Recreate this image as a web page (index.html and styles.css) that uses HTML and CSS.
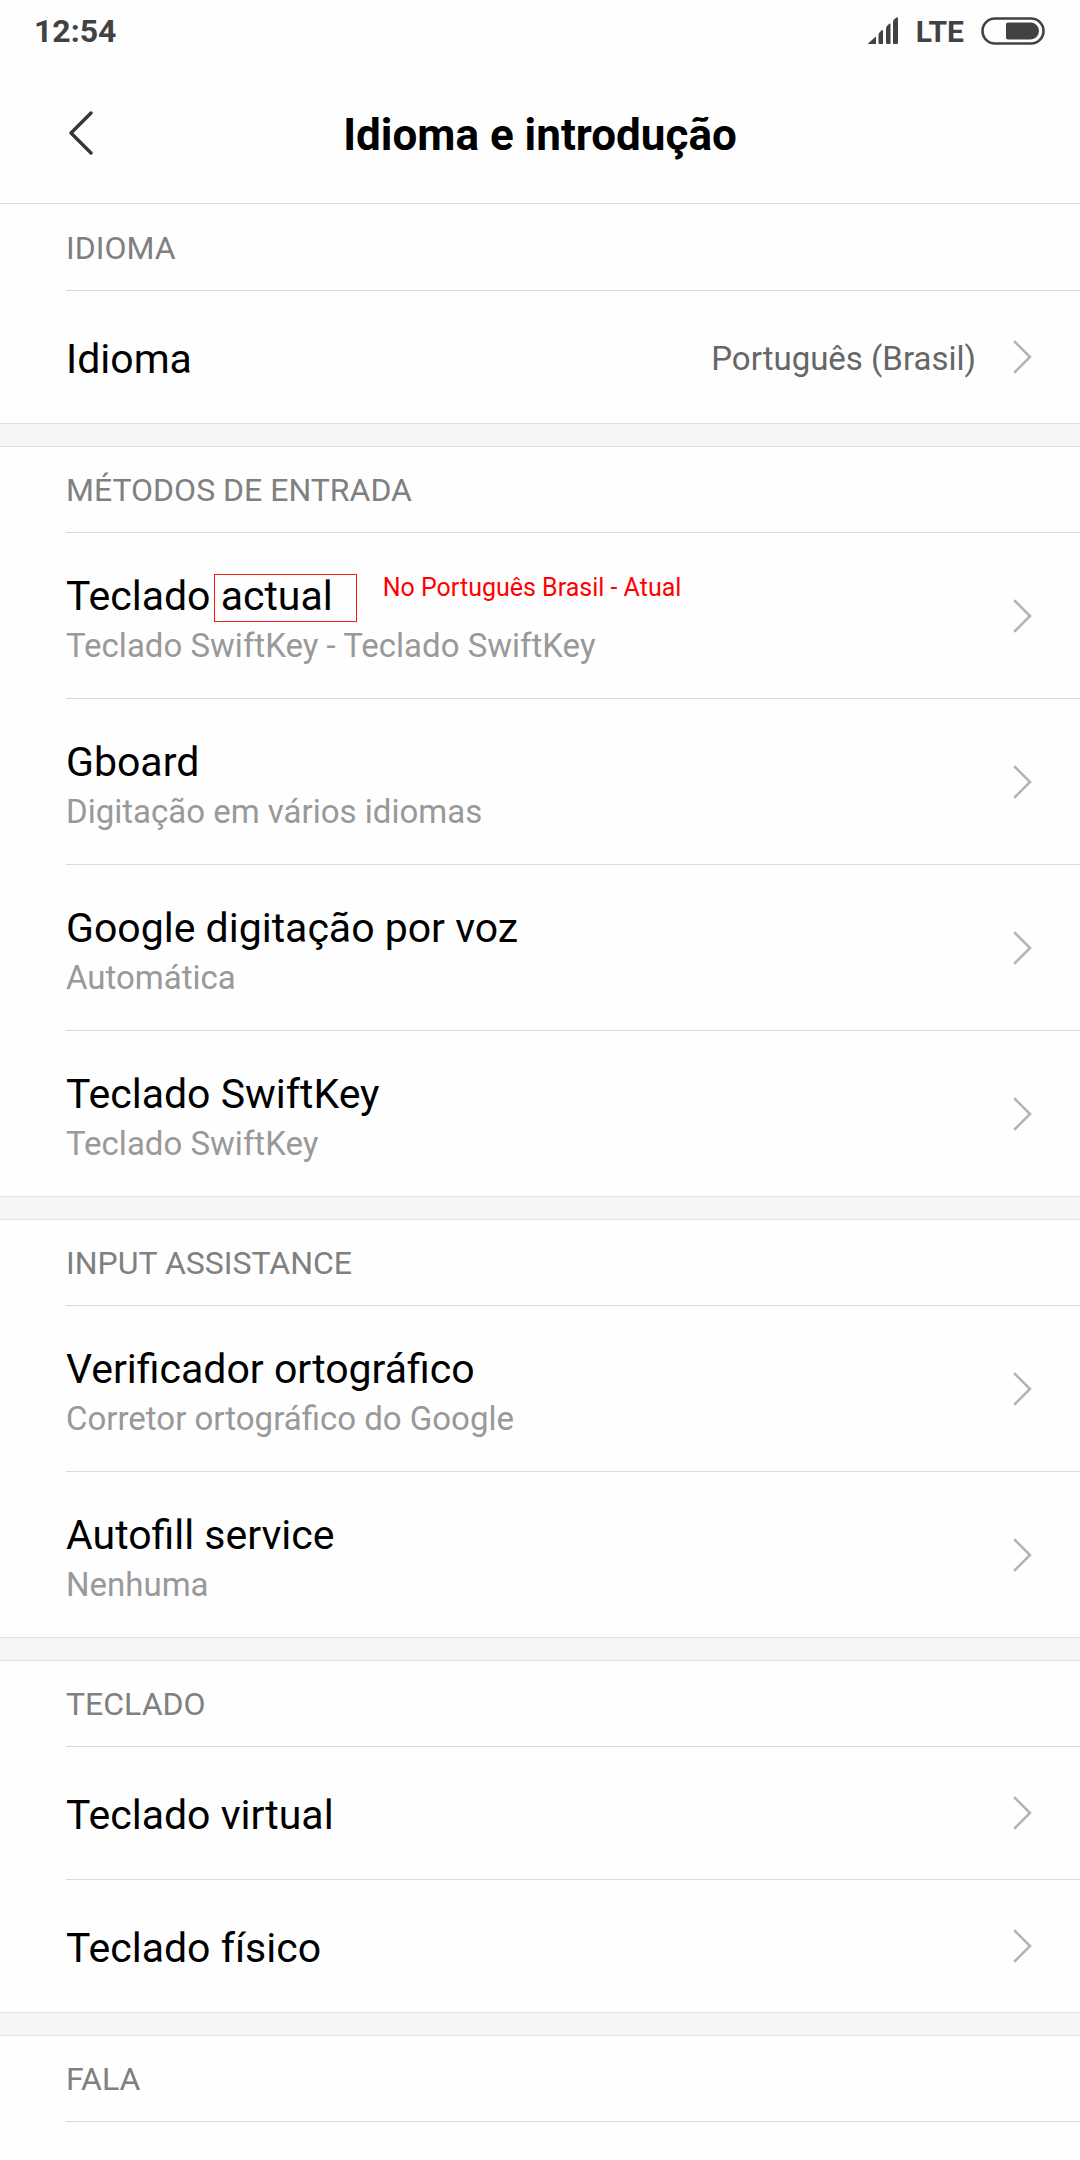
FILE: index.html
```html
<!DOCTYPE html>
<html lang="pt-BR">
<head>
<meta charset="utf-8">
<meta name="viewport" content="width=device-width, initial-scale=1">
<title>Idioma e introdução</title>
<link rel="stylesheet" href="styles.css">
</head>
<body>
<svg class="defs" aria-hidden="true">
  <symbol id="chevron" viewBox="0 0 20 34"><path d="M2 2 17 17 2 32" fill="none" stroke="#b3b3b3" stroke-width="2.6" stroke-linecap="round" stroke-linejoin="miter"/></symbol>
</svg>
<div class="status">
  <span class="clock">12:54</span>
  <div class="indicators">
    <svg class="signal" width="32" height="28" viewBox="0 0 32 28" fill="#424242" aria-hidden="true">
      <path d="M1 26.5 8.300 20Q9 19.500 9 20.500V27H1.500Q.5 27 1 26.500Z"/>
      <path d="M11.500 18Q11.500 16.500 12.500 15.500L14.500 13.500Q16 12.500 16 14V27H12.500Q11.500 27 11.500 26Z"/>
      <path d="M19 11.500Q19 10 20 9L22 7Q23.500 6 23.500 7.500V27H20Q19 27 19 26Z"/>
      <path d="M26 5Q26 3.500 27 2.500L29.500.5Q31 -.3 31 1.200V26Q31 27 30 27H27Q26 27 26 26Z"/>
    </svg>
    <span class="network">LTE</span>
    <svg class="battery" width="64" height="28" viewBox="0 0 64 28" aria-hidden="true">
      <rect x="1.500" y="1.500" width="61" height="25" rx="12.500" fill="none" stroke="#424242" stroke-width="2.600"/>
      <path d="M27 5.500H49.500A8.500 8.500 0 0 1 49.500 22.500H27Q25 22.500 25 20.500V7.500Q25 5.500 27 5.500Z" fill="#424242"/>
    </svg>
  </div>
</div>
<header class="bar">
  <button class="back" type="button" aria-label="Voltar">
    <svg width="24" height="44" viewBox="0 0 24 44" aria-hidden="true"><path d="M22 2 2 22 22 42" fill="none" stroke="#363636" stroke-width="3.400" stroke-linecap="round" stroke-linejoin="round"/></svg>
  </button>
  <h1>Idioma e introdução</h1>
</header>
<main>
  <section>
    <h2>IDIOMA</h2>
    <ul>
      <li><a class="row single" href="#"><span class="text"><span class="name">Idioma</span></span><span class="value">Português (Brasil)</span><svg class="chevron"><use href="#chevron"/></svg></a></li>
    </ul>
  </section>
  <section>
    <h2>MÉTODOS DE ENTRADA</h2>
    <ul>
      <li><a class="row" href="#"><span class="text"><span class="name">Teclado <span class="marked">actual<span class="note">No Português Brasil - Atual</span></span></span><span class="detail">Teclado SwiftKey - Teclado SwiftKey</span></span><svg class="chevron"><use href="#chevron"/></svg></a></li>
      <li><a class="row" href="#"><span class="text"><span class="name">Gboard</span><span class="detail">Digitação em vários idiomas</span></span><svg class="chevron"><use href="#chevron"/></svg></a></li>
      <li><a class="row" href="#"><span class="text"><span class="name">Google digitação por voz</span><span class="detail">Automática</span></span><svg class="chevron"><use href="#chevron"/></svg></a></li>
      <li><a class="row" href="#"><span class="text"><span class="name">Teclado SwiftKey</span><span class="detail">Teclado SwiftKey</span></span><svg class="chevron"><use href="#chevron"/></svg></a></li>
    </ul>
  </section>
  <section>
    <h2>INPUT ASSISTANCE</h2>
    <ul>
      <li><a class="row" href="#"><span class="text"><span class="name">Verificador ortográfico</span><span class="detail">Corretor ortográfico do Google</span></span><svg class="chevron"><use href="#chevron"/></svg></a></li>
      <li><a class="row" href="#"><span class="text"><span class="name">Autofill service</span><span class="detail">Nenhuma</span></span><svg class="chevron"><use href="#chevron"/></svg></a></li>
    </ul>
  </section>
  <section>
    <h2>TECLADO</h2>
    <ul>
      <li><a class="row single" href="#"><span class="text"><span class="name">Teclado virtual</span></span><svg class="chevron"><use href="#chevron"/></svg></a></li>
      <li><a class="row single" href="#"><span class="text"><span class="name">Teclado físico</span></span><svg class="chevron"><use href="#chevron"/></svg></a></li>
    </ul>
  </section>
  <section>
    <h2>FALA</h2>
  </section>
</main>
</body>
</html>
```
FILE: styles.css
```css
* {
  box-sizing: border-box;
}

body {
  margin: 0;
  background: #fefefe;
  color: #000;
  font-family: Roboto, "Noto Sans", sans-serif;
}

.defs {
  position: absolute;
  width: 0;
  height: 0;
}

.status {
  display: flex;
  justify-content: space-between;
  align-items: center;
  height: 62px;
  padding: 0 35px 0 34px;
  color: #424242;
  font-size: 32px;
  font-weight: 700;
}

.indicators {
  display: flex;
  align-items: center;
  gap: 17px;
}

.network {
  font-size: 30px;
}

.bar {
  display: grid;
  grid-template-columns: 96px 1fr 96px;
  align-items: center;
  height: 142px;
  border-bottom: 1px solid #d9d9d9;
}

.back {
  display: flex;
  justify-content: flex-end;
  padding: 0 3px 0 0;
  border: 0;
  background: none;
}

h1 {
  margin: 0;
  padding-top: 4px;
  font-size: 44px;
  line-height: 52px;
  font-weight: 700;
  text-align: center;
}

main {
  padding-top: 1px;
}

section + section {
  border-top: 22px solid #f6f6f6;
  box-shadow: inset 0 1px #e0e0e0;
  padding-top: 1px;
}

h2 {
  margin: 0 0 0 66px;
  padding: 20px 0 19px;
  border-bottom: 1px solid #d9d9d9;
  color: #808080;
  font-size: 32px;
  line-height: 46px;
  font-weight: 400;
}

ul {
  margin: 0;
  padding: 0;
  list-style: none;
}

li {
  margin-left: 66px;
  border-bottom: 1px solid #d9d9d9;
}

li:last-child {
  margin-left: 0;
  padding-left: 66px;
  border-color: #e0e0e0;
}

.row {
  display: flex;
  align-items: center;
  padding-right: 47px;
  color: inherit;
  text-decoration: none;
}

.text {
  flex: 1;
  padding: 36px 0 29px;
}

.single .text,
.single .value {
  padding: 41px 0 37px;
}

.name,
.detail {
  display: block;
}

.name {
  font-size: 41px;
  line-height: 54px;
}

.detail {
  color: #999;
  font-size: 33px;
  line-height: 46px;
}

.value {
  color: #666;
  font-size: 33px;
  line-height: 54px;
}

.chevron {
  width: 20px;
  height: 34px;
  margin-left: 37px;
}

.marked {
  position: relative;
}

/* Review frame drawn round the marked word */
.marked::before {
  content: "";
  position: absolute;
  inset: 2px -24px -2px -7px;
  border: 1px solid #f21b0c;
}

.note {
  position: absolute;
  left: 100%;
  top: 0;
  margin-left: 50px;
  color: #f00;
  font-size: 25px;
  line-height: 32px;
  white-space: nowrap;
}
```
